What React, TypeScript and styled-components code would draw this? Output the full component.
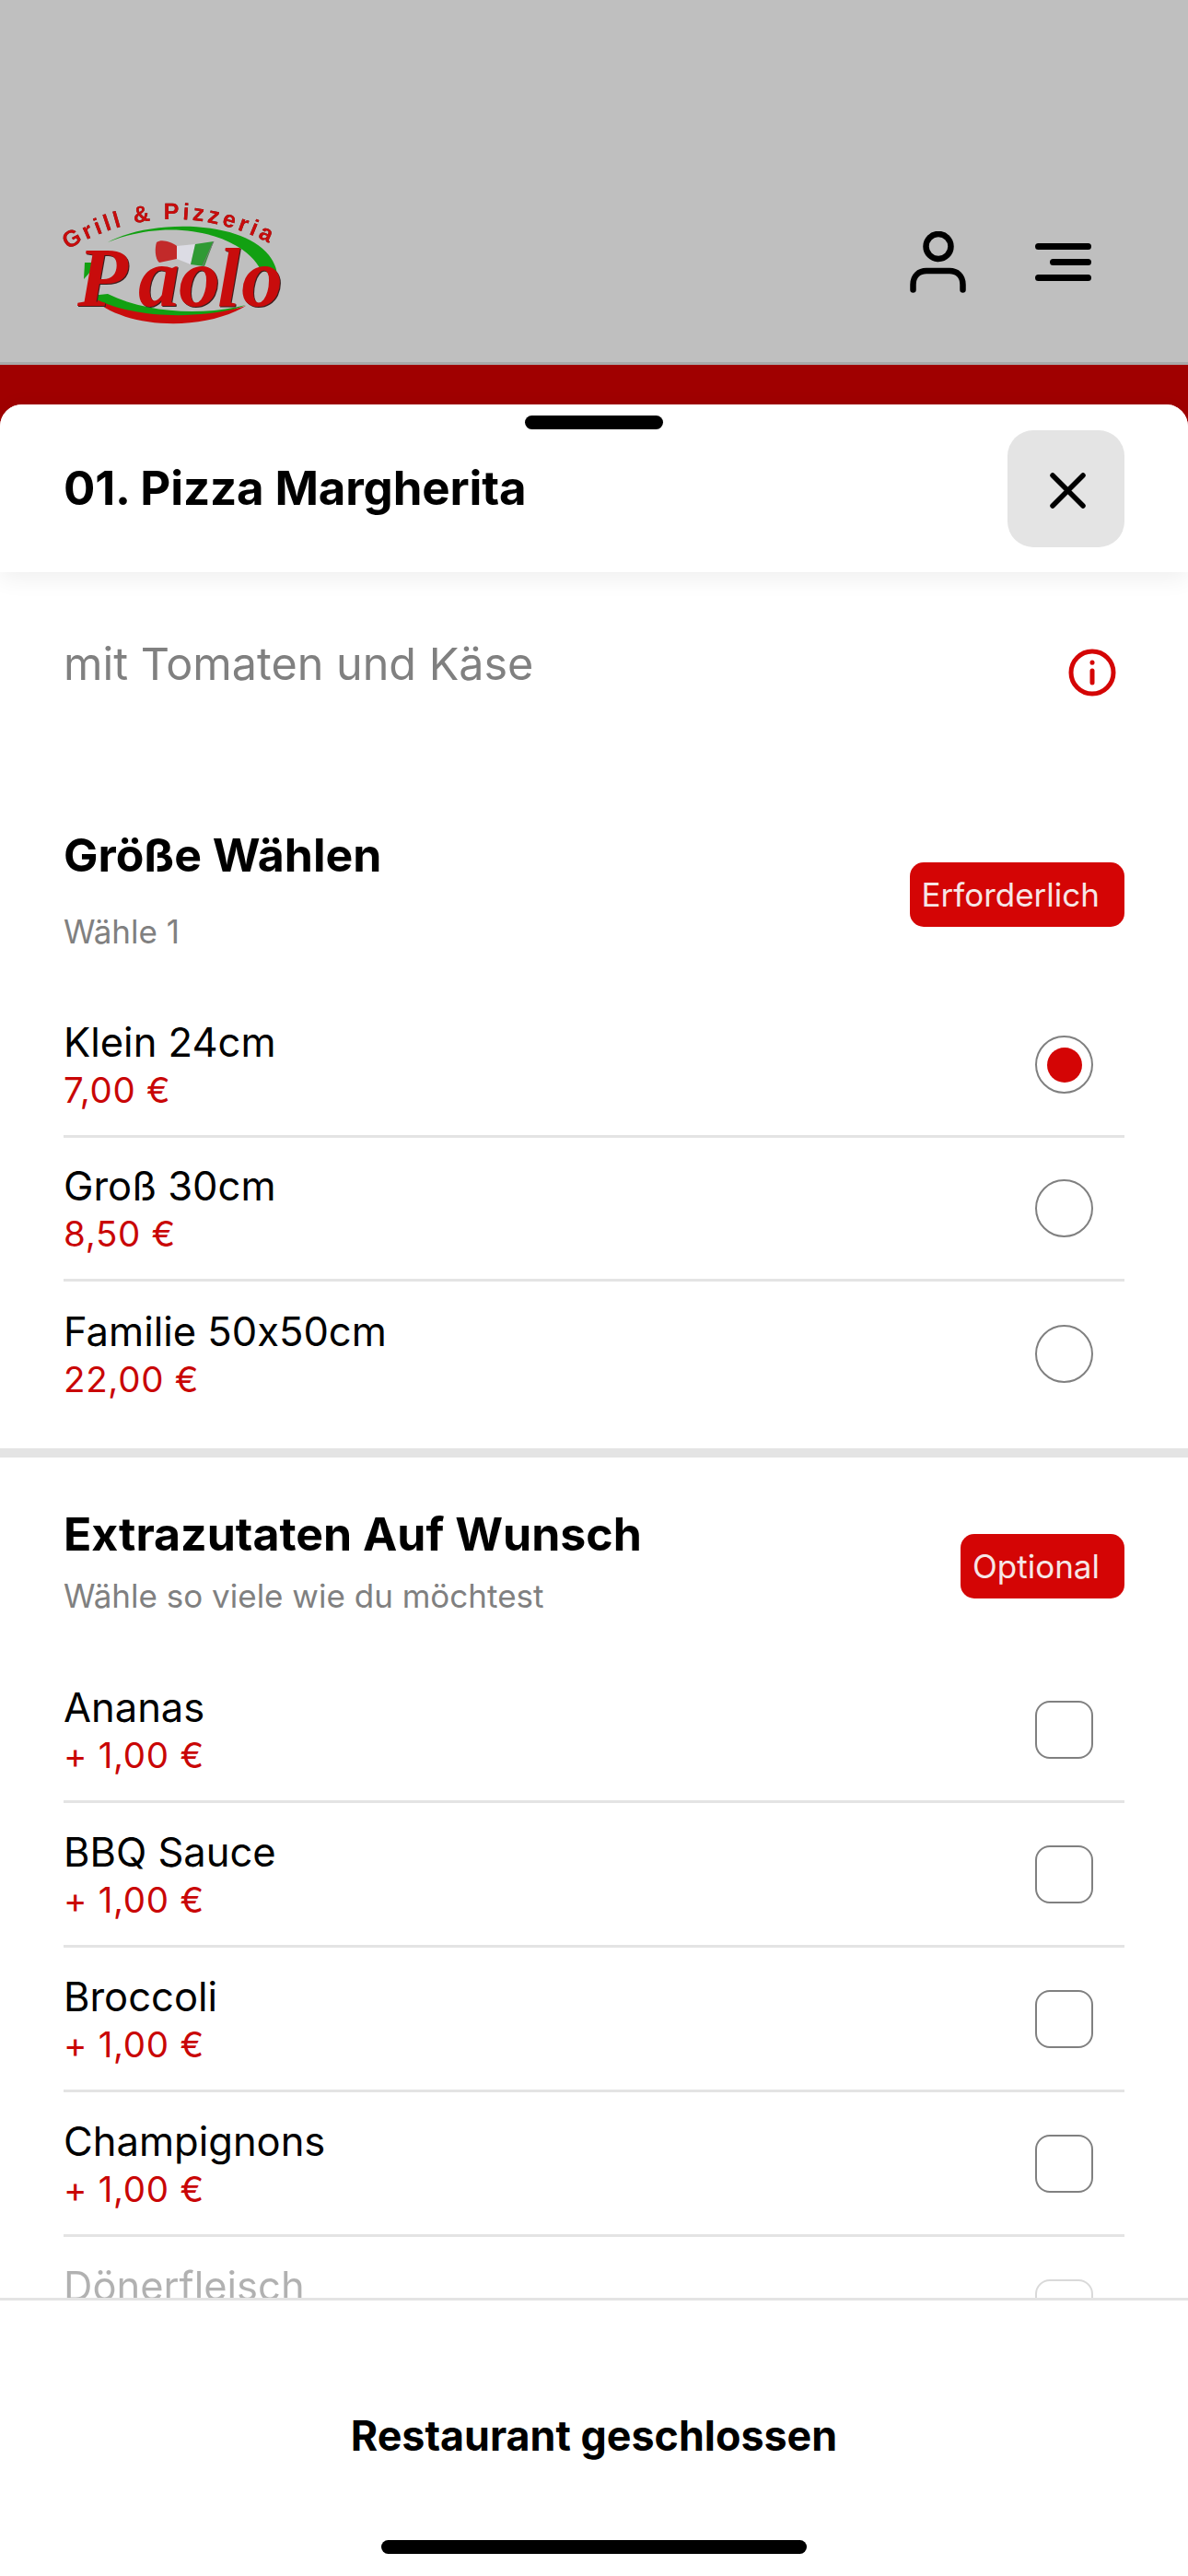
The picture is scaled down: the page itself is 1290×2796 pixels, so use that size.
import React from "react";
import styled, { createGlobalStyle } from "styled-components";

const sizes = [
  { name: "Klein 24cm", price: "7,00 €", selected: true },
  { name: "Groß 30cm", price: "8,50 €", selected: false },
  { name: "Familie 50x50cm", price: "22,00 €", selected: false },
];

const extras = ["Ananas", "BBQ Sauce", "Broccoli", "Champignons"];

const GlobalStyle = createGlobalStyle`
  html, body {
    margin: 0;
    padding: 0;
    background: #fff;
  }
  * {
    box-sizing: border-box;
  }
`;

const Page = styled.div`
  position: relative;
  width: 1290px;
  height: 2796px;
  overflow: hidden;
  display: flex;
  flex-direction: column;
  background: #bfbfbf;
  font-family: Inter, "Liberation Sans", sans-serif;
  font-feature-settings: "calt" 0;
  color: #000;
`;

const TopBar = styled.header`
  height: 396px;
  flex-shrink: 0;
  display: flex;
  align-items: flex-start;
  justify-content: space-between;
  padding: 215px 105px 0 70px;
  border-bottom: 3px solid #a9a9a9;
`;

const Actions = styled.div`
  display: flex;
  align-items: center;
  gap: 75px;
  padding-top: 36px;
`;

const RedBand = styled.div`
  height: 67px;
  margin-bottom: -24px;
  flex-shrink: 0;
  background: #a00000;
`;

const Sheet = styled.section`
  position: relative;
  flex: 1;
  min-height: 0;
  display: flex;
  flex-direction: column;
  background: #fff;
  border-radius: 24px 24px 0 0;
`;

const Handle = styled.div`
  position: absolute;
  top: 12px;
  left: 570px;
  width: 150px;
  height: 15px;
  border-radius: 8px;
  background: #000;
  z-index: 2;
`;

const SheetHeader = styled.div`
  height: 182px;
  flex-shrink: 0;
  display: flex;
  align-items: center;
  justify-content: space-between;
  padding: 0 69px;
  box-shadow: 0 6px 26px rgba(0, 0, 0, 0.07);
  position: relative;
  z-index: 1;
  background: #fff;
  border-radius: 24px 24px 0 0;
`;

const Title = styled.h1`
  margin: 0 0 2px;
  font-size: 51px;
  font-weight: 700;
  letter-spacing: -0.15px;
`;

const CloseButton = styled.button`
  width: 127px;
  height: 127px;
  border: 0;
  border-radius: 28px;
  background: #e4e4e4;
  display: flex;
  align-items: center;
  justify-content: center;
  padding: 4px 0 0 4px;
`;

const Scroll = styled.div`
  flex: 1;
  min-height: 0;
  overflow: hidden;
  padding-top: 70px;
`;

const Description = styled.div`
  display: flex;
  justify-content: space-between;
  padding: 0 78px 0 69px;
  height: 154px;
  font-size: 48.5px;
  color: #808080;
`;

const InfoSlot = styled.div`
  padding-top: 13px;
`;

const Group = styled.div<{ $last?: boolean }>`
  padding: 0 69px ${({ $last }) => ($last ? "0" : "25px")};
`;

const GroupHead = styled.div`
  display: flex;
  align-items: center;
  justify-content: space-between;
  padding: 53px 0 47px;
`;

const GroupTitle = styled.h2`
  margin: 0;
  font-size: 50px;
  line-height: 60px;
  font-weight: 700;
`;

const GroupHint = styled.div<{ $gap: number }>`
  margin-top: ${({ $gap }) => $gap}px;
  font-size: 35px;
  line-height: 42px;
  color: #808080;
`;

const Badge = styled.span`
  height: 70px;
  margin-top: 12px;
  padding: 0 27px 0 13px;
  display: flex;
  align-items: center;
  border-radius: 15px;
  background: #d40505;
  color: #f6e6e6;
  font-size: 35px;
`;

const Row = styled.div<{ $faded?: boolean; $height: number }>`
  height: ${({ $height }) => $height}px;
  display: flex;
  align-items: center;
  justify-content: space-between;
  border-bottom: 3px solid #e4e4e4;
  padding-right: 34px;
  opacity: ${({ $faded }) => ($faded ? 0.3 : 1)};
  &:last-child {
    border-bottom: ${({ $faded }) => ($faded ? "3px solid #e4e4e4" : "0")};
  }
`;

const Name = styled.div`
  font-size: 43.5px;
  line-height: 52px;
`;

const Price = styled.div`
  margin-top: 3px;
  font-size: 38.5px;
  line-height: 46px;
  letter-spacing: 0.7px;
  color: #c90606;
`;

const Radio = styled.div<{ $on: boolean }>`
  width: 63px;
  height: 63px;
  border-radius: 50%;
  border: 2px solid #808080;
  display: flex;
  align-items: center;
  justify-content: center;
  &::after {
    content: "";
    display: ${({ $on }) => ($on ? "block" : "none")};
    width: 38px;
    height: 38px;
    border-radius: 50%;
    background: #d40505;
  }
`;

const Check = styled.div`
  width: 63px;
  height: 63px;
  border-radius: 16px;
  border: 2px solid #808080;
`;

const SectionRule = styled.div`
  height: 10px;
  background: #e4e4e4;
`;

const Footer = styled.footer`
  position: absolute;
  left: 0;
  right: 0;
  bottom: 0;
  height: 302px;
  background: #fff;
  border-top: 3px solid #e4e4e4;
  z-index: 2;
  display: flex;
  justify-content: center;
  padding-top: 120px;
  font-size: 44.8px;
  font-weight: 700;
`;

const HomeBar = styled.div`
  position: absolute;
  left: 414px;
  bottom: 24px;
  width: 462px;
  height: 15px;
  border-radius: 8px;
  background: #000;
`;

const LogoMark = styled.svg`
  display: block;
  overflow: visible;
`;

const LogoArc = styled.text`
  font-family: "Liberation Sans", Arial, sans-serif;
  font-size: 25px;
  font-weight: 700;
  letter-spacing: 3.6px;
  fill: #c80c0c;
  filter: drop-shadow(0.6px 0.8px 0 #4a2a2a);
`;

const LogoName = styled.text`
  font-family: "Liberation Serif", serif;
  font-size: 90px;
  font-weight: 700;
  font-style: italic;
  fill: #c80c0c;
  filter: drop-shadow(1px 1px 0 #3a2020);
`;

const Logo = () => (
  <LogoMark width="240" height="140" viewBox="0 0 240 140">
    <defs>
      <path id="logo-arc" d="M3 56Q118 -10 236 56" />
    </defs>
    <path d="M47 48C90 24 190 22 222 62C231 74 231 82 230 84L213 78C196 42 120 18 47 48Z" fill="#12a012" />
    <path d="M28 106C60 130 140 140 197 116C150 128 90 125 47 104Z" fill="#12a012" />
    <path d="M28 106C60 142 150 146 197 117C150 132 70 132 28 106Z" fill="#c90c0c" />
    <path d="M22 70H37L21 88Z" fill="#12a012" />
    <path d="M100 48C106 44 116 48 122 52L122 66L103 70C98 66 98 54 100 48Z" fill="#c22a2a" />
    <path d="M122 52L142 50L137 72L122 66Z" fill="#dcdce4" />
    <path d="M142 50L162 47L152 74L137 72Z" fill="#2f9a34" />
    <path d="M162 47L148 78" stroke="#777" strokeWidth="1" fill="none" />
    <LogoArc>
      <textPath href="#logo-arc">Grill &amp; Pizzeria</textPath>
    </LogoArc>
    <LogoName x="14 80 124 166 192" y="117">
      Paolo
    </LogoName>
  </LogoMark>
);

const UserIcon = () => (
  <svg width="61" height="67" viewBox="0 0 61 67" fill="none" stroke="#000" strokeWidth="6.5" strokeLinecap="round">
    <circle cx="31" cy="16.5" r="13.5" />
    <path d="M3.5 63.5V58C3.5 48 10 43 18 43H43C51 43 57.5 48 57.5 58V63.5" />
  </svg>
);

const MenuIcon = () => (
  <svg width="61" height="41" viewBox="0 0 61 41" fill="none" stroke="#000" strokeWidth="7" strokeLinecap="round">
    <path d="M3.5 3.5H57.5M19.5 20.5H57.5M3.5 37.5H57.5" />
  </svg>
);

const CloseIcon = () => (
  <svg width="39" height="39" viewBox="0 0 39 39" fill="none" stroke="#000" strokeWidth="5.5" strokeLinecap="round">
    <path d="M3 3L36 36M36 3L3 36" />
  </svg>
);

const InfoIcon = () => (
  <svg width="52" height="52" viewBox="0 0 52 52" fill="none" stroke="#d40505" strokeWidth="5" strokeLinecap="round">
    <circle cx="26" cy="26" r="23" />
    <path d="M26 24V37" />
    <path d="M26 15V15.2" />
  </svg>
);

export default function App() {
  return (
    <Page>
      <GlobalStyle />
      <TopBar>
        <Logo />
        <Actions>
          <UserIcon />
          <MenuIcon />
        </Actions>
      </TopBar>
      <RedBand />
      <Sheet>
        <Handle />
        <SheetHeader>
          <Title>01. Pizza Margherita</Title>
          <CloseButton>
            <CloseIcon />
          </CloseButton>
        </SheetHeader>
        <Scroll>
          <Description>
            <div>mit Tomaten und Käse</div>
            <InfoSlot>
              <InfoIcon />
            </InfoSlot>
          </Description>
          <Group>
            <GroupHead>
              <div>
                <GroupTitle>Größe Wählen</GroupTitle>
                <GroupHint $gap={32}>Wähle 1</GroupHint>
              </div>
              <Badge>Erforderlich</Badge>
            </GroupHead>
            {sizes.map((s) => (
              <Row key={s.name} $height={156}>
                <div>
                  <Name>{s.name}</Name>
                  <Price>{s.price}</Price>
                </div>
                <Radio $on={s.selected} />
              </Row>
            ))}
          </Group>
          <SectionRule />
          <Group $last>
            <GroupHead>
              <div>
                <GroupTitle>Extrazutaten Auf Wunsch</GroupTitle>
                <GroupHint $gap={16}>Wähle so viele wie du möchtest</GroupHint>
              </div>
              <Badge>Optional</Badge>
            </GroupHead>
            {extras.map((name) => (
              <Row key={name} $height={157}>
                <div>
                  <Name>{name}</Name>
                  <Price>+ 1,00 €</Price>
                </div>
                <Check />
              </Row>
            ))}
            <Row $faded $height={157}>
              <div>
                <Name>Dönerfleisch</Name>
                <Price>+ 1,00 €</Price>
              </div>
              <Check />
            </Row>
          </Group>
        </Scroll>
        <Footer>
          Restaurant geschlossen
          <HomeBar />
        </Footer>
      </Sheet>
    </Page>
  );
}
